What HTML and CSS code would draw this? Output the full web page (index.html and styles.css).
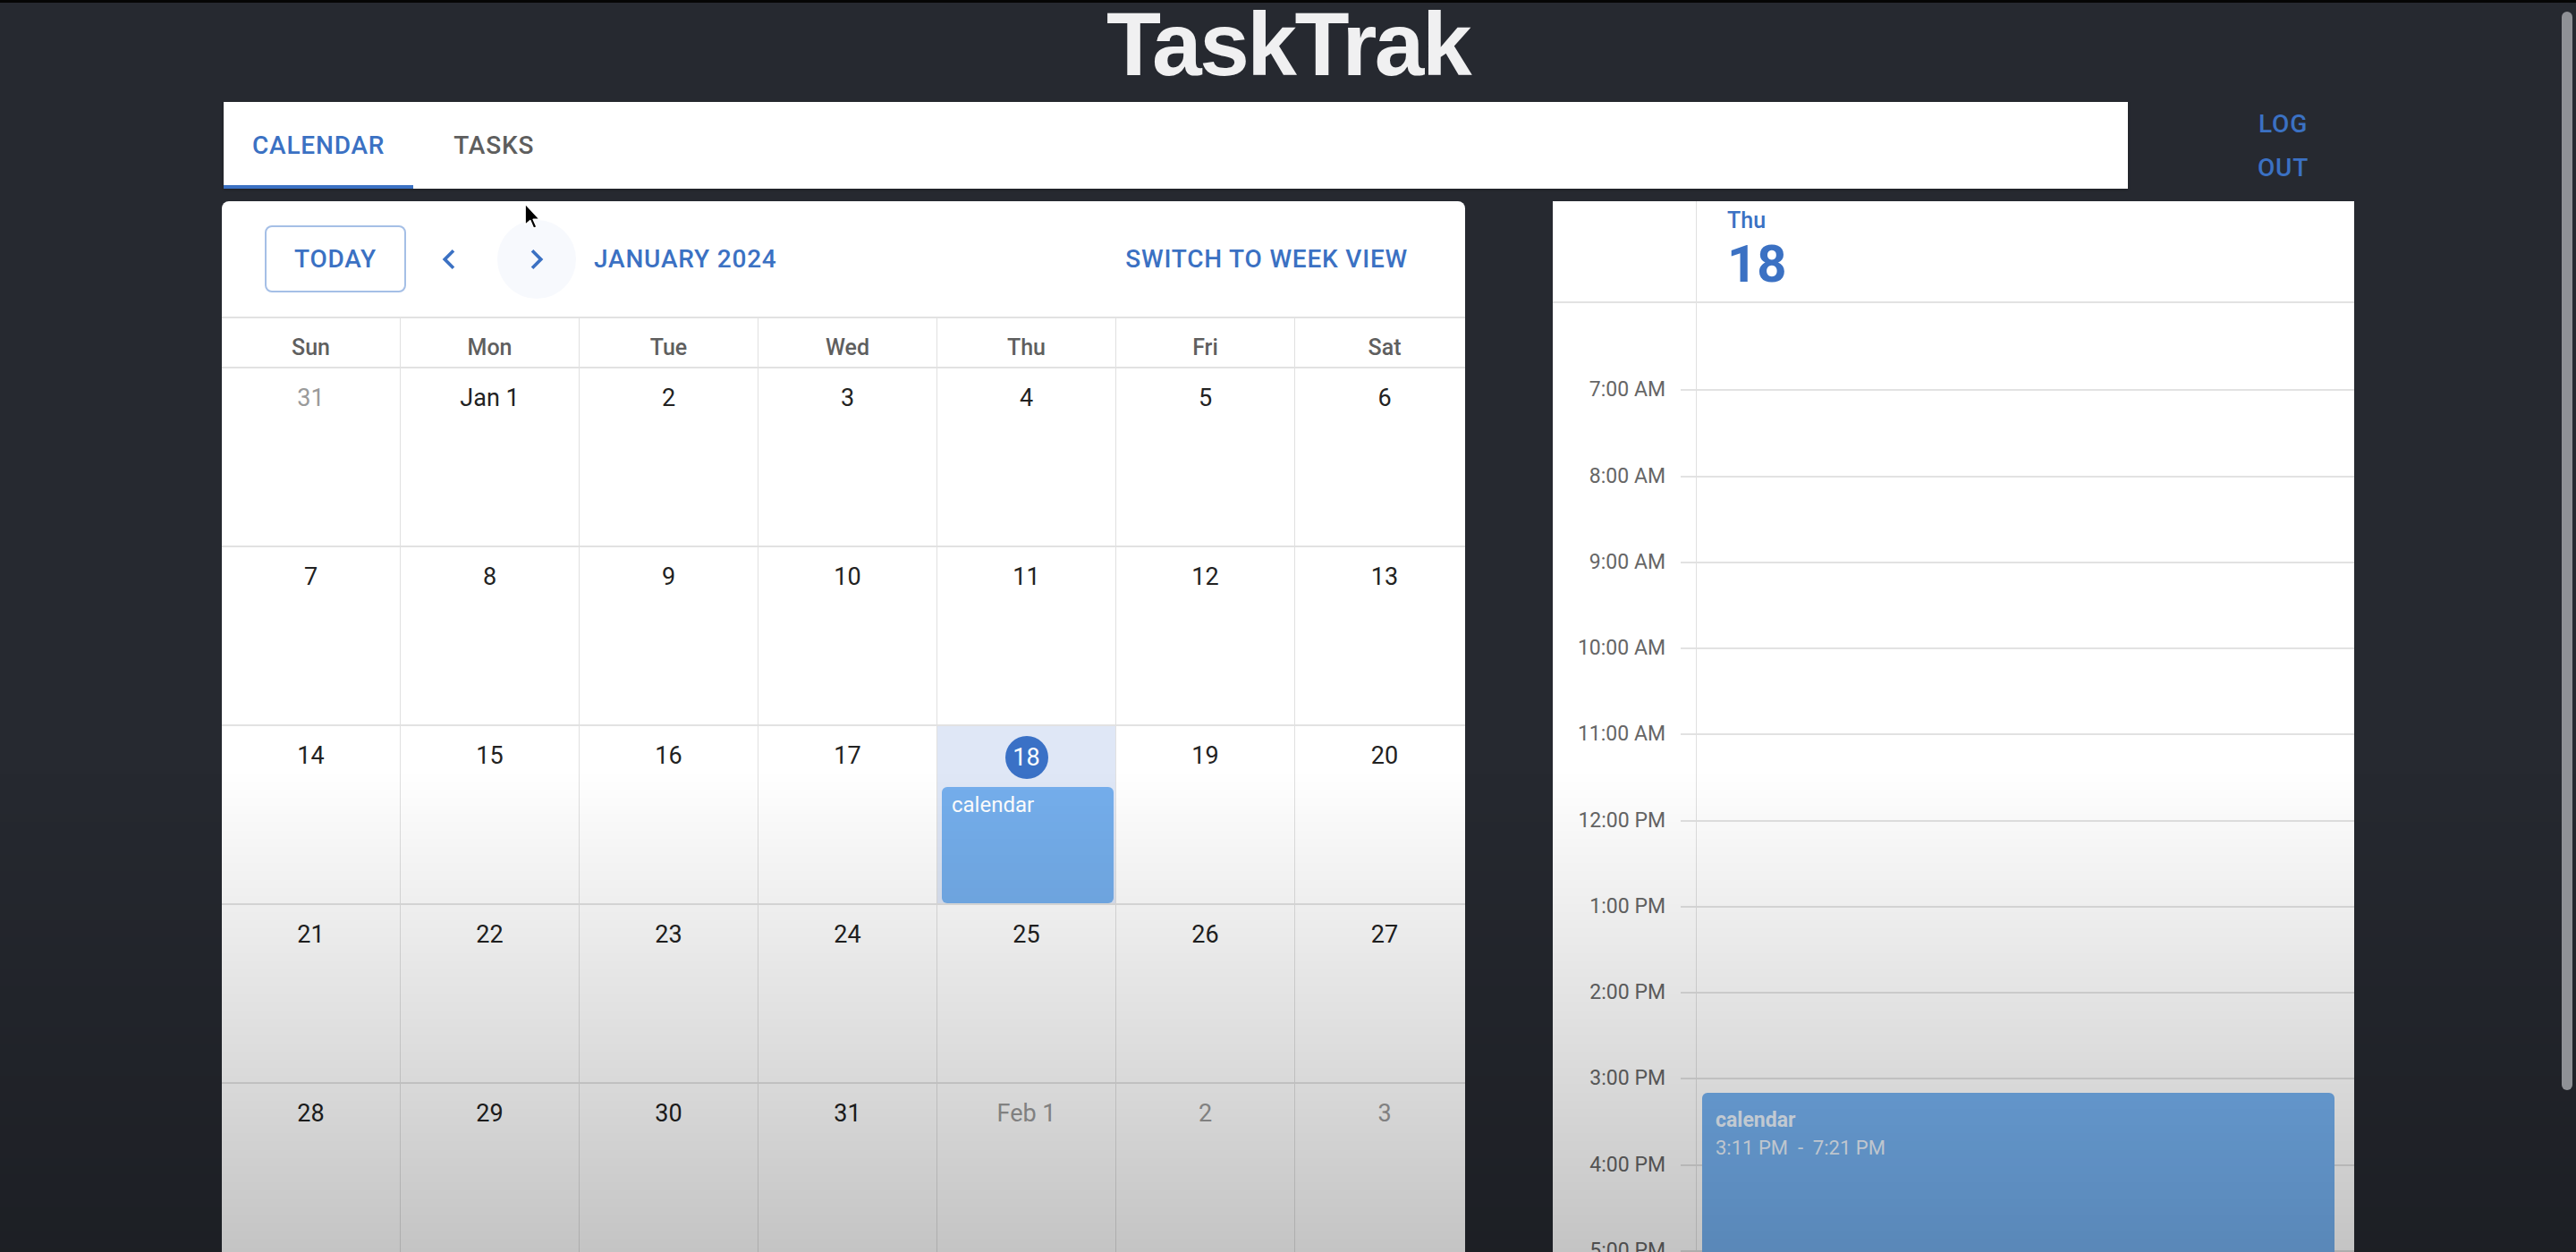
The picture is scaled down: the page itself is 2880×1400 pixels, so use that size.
FILE: index.html
```html
<!DOCTYPE html>
<html lang="en">
<head>
<meta charset="utf-8">
<title>TaskTrak</title>
<link rel="stylesheet" href="styles.css">
</head>
<body>
<h1 class="brand">TaskTrak</h1>
<div class="page">
  <div class="nav-row">
    <nav class="tabs">
      <div class="tab active">Calendar</div>
      <div class="tab">Tasks</div>
    </nav>
    <div class="logout">Log out</div>
  </div>
  <div class="main-row">
    <section class="month-card">
      <div class="toolbar">
        <div class="btn-today">Today</div>
        <div class="icon-btn prev"><svg viewBox="0 0 24 24" width="44" height="44"><path d="M15.41 7.41 14 6l-6 6 6 6 1.41-1.41L10.83 12z"/></svg></div>
        <div class="icon-btn next hover"><svg viewBox="0 0 24 24" width="44" height="44"><path d="M10 6 8.59 7.41 13.17 12l-4.58 4.59L10 18l6-6z"/></svg></div>
        <div class="month-label">January 2024</div>
        <div class="switch">Switch to week view</div>
      </div>
      <div class="weekdays">
        <div>Sun</div><div>Mon</div><div>Tue</div><div>Wed</div><div>Thu</div><div>Fri</div><div>Sat</div>
      </div>
      <div class="month-grid">
        <div class="cell"><span class="num other">31</span></div>
        <div class="cell"><span class="num">Jan 1</span></div>
        <div class="cell"><span class="num">2</span></div>
        <div class="cell"><span class="num">3</span></div>
        <div class="cell"><span class="num">4</span></div>
        <div class="cell"><span class="num">5</span></div>
        <div class="cell"><span class="num">6</span></div>

        <div class="cell"><span class="num">7</span></div>
        <div class="cell"><span class="num">8</span></div>
        <div class="cell"><span class="num">9</span></div>
        <div class="cell"><span class="num">10</span></div>
        <div class="cell"><span class="num">11</span></div>
        <div class="cell"><span class="num">12</span></div>
        <div class="cell"><span class="num">13</span></div>

        <div class="cell"><span class="num">14</span></div>
        <div class="cell"><span class="num">15</span></div>
        <div class="cell"><span class="num">16</span></div>
        <div class="cell"><span class="num">17</span></div>
        <div class="cell today"><span class="num today-num">18</span><div class="m-event">calendar</div></div>
        <div class="cell"><span class="num">19</span></div>
        <div class="cell"><span class="num">20</span></div>

        <div class="cell"><span class="num">21</span></div>
        <div class="cell"><span class="num">22</span></div>
        <div class="cell"><span class="num">23</span></div>
        <div class="cell"><span class="num">24</span></div>
        <div class="cell"><span class="num">25</span></div>
        <div class="cell"><span class="num">26</span></div>
        <div class="cell"><span class="num">27</span></div>

        <div class="cell"><span class="num">28</span></div>
        <div class="cell"><span class="num">29</span></div>
        <div class="cell"><span class="num">30</span></div>
        <div class="cell"><span class="num">31</span></div>
        <div class="cell"><span class="num other">Feb 1</span></div>
        <div class="cell"><span class="num other">2</span></div>
        <div class="cell"><span class="num other">3</span></div>
      </div>
    </section>

    <section class="day-card">
      <div class="day-head">
        <div class="gutter"></div>
        <div class="day-title">
          <div class="dow">Thu</div>
          <div class="dnum">18</div>
        </div>
      </div>
      <div class="day-body">
        <div class="hour first"><div class="g"></div><div class="slot"></div></div>
        <div class="hour"><div class="g"><span>7:00 AM</span></div><div class="slot"></div></div>
        <div class="hour"><div class="g"><span>8:00 AM</span></div><div class="slot"></div></div>
        <div class="hour"><div class="g"><span>9:00 AM</span></div><div class="slot"></div></div>
        <div class="hour"><div class="g"><span>10:00 AM</span></div><div class="slot"></div></div>
        <div class="hour"><div class="g"><span>11:00 AM</span></div><div class="slot"></div></div>
        <div class="hour"><div class="g"><span>12:00 PM</span></div><div class="slot"></div></div>
        <div class="hour"><div class="g"><span>1:00 PM</span></div><div class="slot"></div></div>
        <div class="hour"><div class="g"><span>2:00 PM</span></div><div class="slot"></div></div>
        <div class="hour"><div class="g"><span>3:00 PM</span></div><div class="slot"></div></div>
        <div class="hour"><div class="g"><span>4:00 PM</span></div><div class="slot"></div></div>
        <div class="hour"><div class="g"><span>5:00 PM</span></div><div class="slot"></div></div>
        <div class="hour"><div class="g"><span>6:00 PM</span></div><div class="slot"></div></div>
        <div class="d-event">
          <div class="d-event-title">calendar</div>
          <div class="d-event-time">3:11 PM &nbsp;-&nbsp; 7:21 PM</div>
        </div>
      </div>
    </section>
  </div>
</div>
<div class="video-shade"></div>
<div class="scrollbar"></div>
<svg class="cursor" viewBox="0 0 17 28" width="19" height="31"><path d="M1 1 L1 22 L6 17.5 L9.5 25.5 L12.5 24.2 L9 16.5 L15.5 16.5 Z" fill="#000" stroke="#fff" stroke-width="1.2" stroke-linejoin="round"/></svg>
</body>
</html>
```

FILE: styles.css
```css
* { box-sizing: border-box; }

html, body {
  margin: 0;
  padding: 0;
}

body {
  background: #262930;
  border-top: 3px solid #050505;
  height: 1400px;
  overflow: hidden;
  font-family: Roboto, "Noto Sans", sans-serif;
  color: #222;
}

.brand {
  margin: 0;
  height: 90px;
  text-align: center;
  font-family: "Liberation Sans", Arial, sans-serif;
  font-weight: 700;
  font-size: 100px;
  line-height: 92px;
  letter-spacing: -2.5px;
  color: #f0f0f1;
}

.page {
  padding-left: 248px;
  padding-top: 21px;
}

.nav-row {
  display: flex;
  align-items: flex-start;
}

.tabs {
  margin-left: 2px;
  width: 2129px;
  height: 97px;
  background: #fff;
  display: flex;
  box-shadow: 0 1px 3px rgba(0,0,0,0.25);
}

.tab {
  min-width: 180px;
  padding: 0 32px;
  height: 97px;
  display: flex;
  align-items: center;
  justify-content: center;
  text-transform: uppercase;
  font-size: 28px;
  font-weight: 500;
  letter-spacing: 0.8px;
  color: #5e5e5e;
}

.tab.active {
  color: #3b71c3;
  box-shadow: inset 0 -4px 0 #3b71c3;
}

.logout {
  margin-left: 145px;
  width: min-content;
  text-align: center;
  text-transform: uppercase;
  font-size: 28px;
  font-weight: 500;
  letter-spacing: 0.8px;
  line-height: 49px;
  color: #3b71c3;
}

.main-row {
  display: flex;
  gap: 98px;
  margin-top: 13px;
  align-items: flex-start;
}

/* Month card */
.month-card {
  width: 1390px;
  background: #fff;
  border-radius: 8px 8px 0 0;
  overflow: hidden;
}

.toolbar {
  height: 129px;
  display: flex;
  align-items: center;
  padding: 0 64px 0 48px;
}

.btn-today {
  width: 158px;
  height: 75px;
  border: 2px solid #a5bfe6;
  border-radius: 8px;
  display: flex;
  align-items: center;
  justify-content: center;
  text-transform: uppercase;
  font-size: 28px;
  font-weight: 500;
  letter-spacing: 0.8px;
  color: #3b71c3;
}

.icon-btn {
  width: 88px;
  height: 88px;
  border-radius: 50%;
  display: flex;
  align-items: center;
  justify-content: center;
  fill: #3b71c3;
}

.icon-btn.prev { margin-left: 4px; }
.icon-btn.next { margin-left: 10px; }
.icon-btn.hover { background: #f7f9fd; }

.month-label {
  margin-left: 20px;
  text-transform: uppercase;
  font-size: 28px;
  font-weight: 500;
  letter-spacing: 0.8px;
  color: #3b71c3;
}

.switch {
  margin-left: auto;
  text-transform: uppercase;
  font-size: 28px;
  font-weight: 500;
  letter-spacing: 0.8px;
  color: #3b71c3;
}

.weekdays {
  display: grid;
  grid-template-columns: repeat(7, 200px);
  height: 58px;
  border-top: 2px solid #e2e2e2;
  border-bottom: 2px solid #e2e2e2;
}

.weekdays div {
  display: flex;
  align-items: center;
  justify-content: center;
  padding-top: 11px;
  font-size: 25px;
  font-weight: 500;
  color: #5f5f5f;
  border-right: 1px solid #e0e0e0;
}

.weekdays div:last-child { border-right: none; }

.month-grid {
  display: grid;
  grid-template-columns: repeat(7, 200px);
  grid-template-rows: repeat(5, 200px);
}

.cell {
  border-right: 1px solid #e0e0e0;
  border-bottom: 2px solid #e2e2e2;
  display: flex;
  flex-direction: column;
  align-items: center;
}

.cell:nth-child(7n) { border-right: none; }

.num {
  margin-top: 9px;
  height: 48px;
  min-width: 48px;
  display: flex;
  align-items: center;
  justify-content: center;
  font-size: 27px;
  color: #222;
}

.num.other { color: #9a9a9a; }

.cell.today { background: #dfe7f6; }

.num.today-num {
  margin-top: 11px;
  width: 48px;
  border-radius: 50%;
  background: #3a71c6;
  color: #fff;
}

.m-event {
  align-self: stretch;
  margin: 9px 2px 0 5px;
  flex: 1;
  background: #75afed;
  border-radius: 6px;
  padding: 6px 11px;
  font-size: 24px;
  line-height: 28px;
  color: #fff;
}

/* Day card */
.day-card {
  width: 896px;
  background: #fff;
}

.day-head {
  display: flex;
  height: 114px;
  border-bottom: 2px solid #e2e2e2;
}

.gutter {
  width: 161px;
  border-right: 1px solid #e0e0e0;
}

.day-title {
  padding: 7px 0 0 34px;
  color: #3b71c3;
}

.dow {
  font-size: 25px;
  line-height: 30px;
  font-weight: 500;
}

.dnum {
  margin-top: 4px;
  font-size: 58px;
  line-height: 58px;
  font-weight: 700;
}

.day-body {
  position: relative;
}

.hour {
  display: grid;
  grid-template-columns: 161px 1fr;
  height: 96.25px;
}

.hour .g {
  border-right: 1px solid #e0e0e0;
  position: relative;
  text-align: right;
  padding-right: 34px;
}

.hour .g span {
  display: block;
  margin-top: -13px;
  font-size: 23px;
  line-height: 28px;
  color: #666;
}

.hour .g::after {
  content: "";
  position: absolute;
  top: 0;
  right: 0;
  width: 17px;
  height: 2px;
  background: #e2e2e2;
}

.hour .slot {
  border-top: 2px solid #e2e2e2;
}

.hour.first .g::after { display: none; }
.hour.first .slot { border-top: none; }

.d-event {
  position: absolute;
  top: 882.6px;
  left: 167px;
  right: 22px;
  height: 401px;
  background: #75b1f0;
  border-radius: 6px;
  padding: 16px 15px;
  color: rgba(255, 255, 255, 0.85);
}

.d-event-title {
  font-size: 23px;
  line-height: 30px;
  font-weight: 700;
}

.d-event-time {
  font-size: 22px;
  line-height: 32px;
}

/* overlays from the captured frame */
.video-shade {
  position: fixed;
  inset: 0;
  pointer-events: none;
  background: linear-gradient(to bottom, rgba(0,0,0,0) 860px, rgba(0,0,0,0.23) 1400px);
}

.scrollbar {
  position: fixed;
  top: 13px;
  right: 4px;
  width: 12px;
  height: 1206px;
  border-radius: 6px;
  background: #8f9196;
}

.cursor {
  position: fixed;
  left: 586px;
  top: 227px;
}
```
